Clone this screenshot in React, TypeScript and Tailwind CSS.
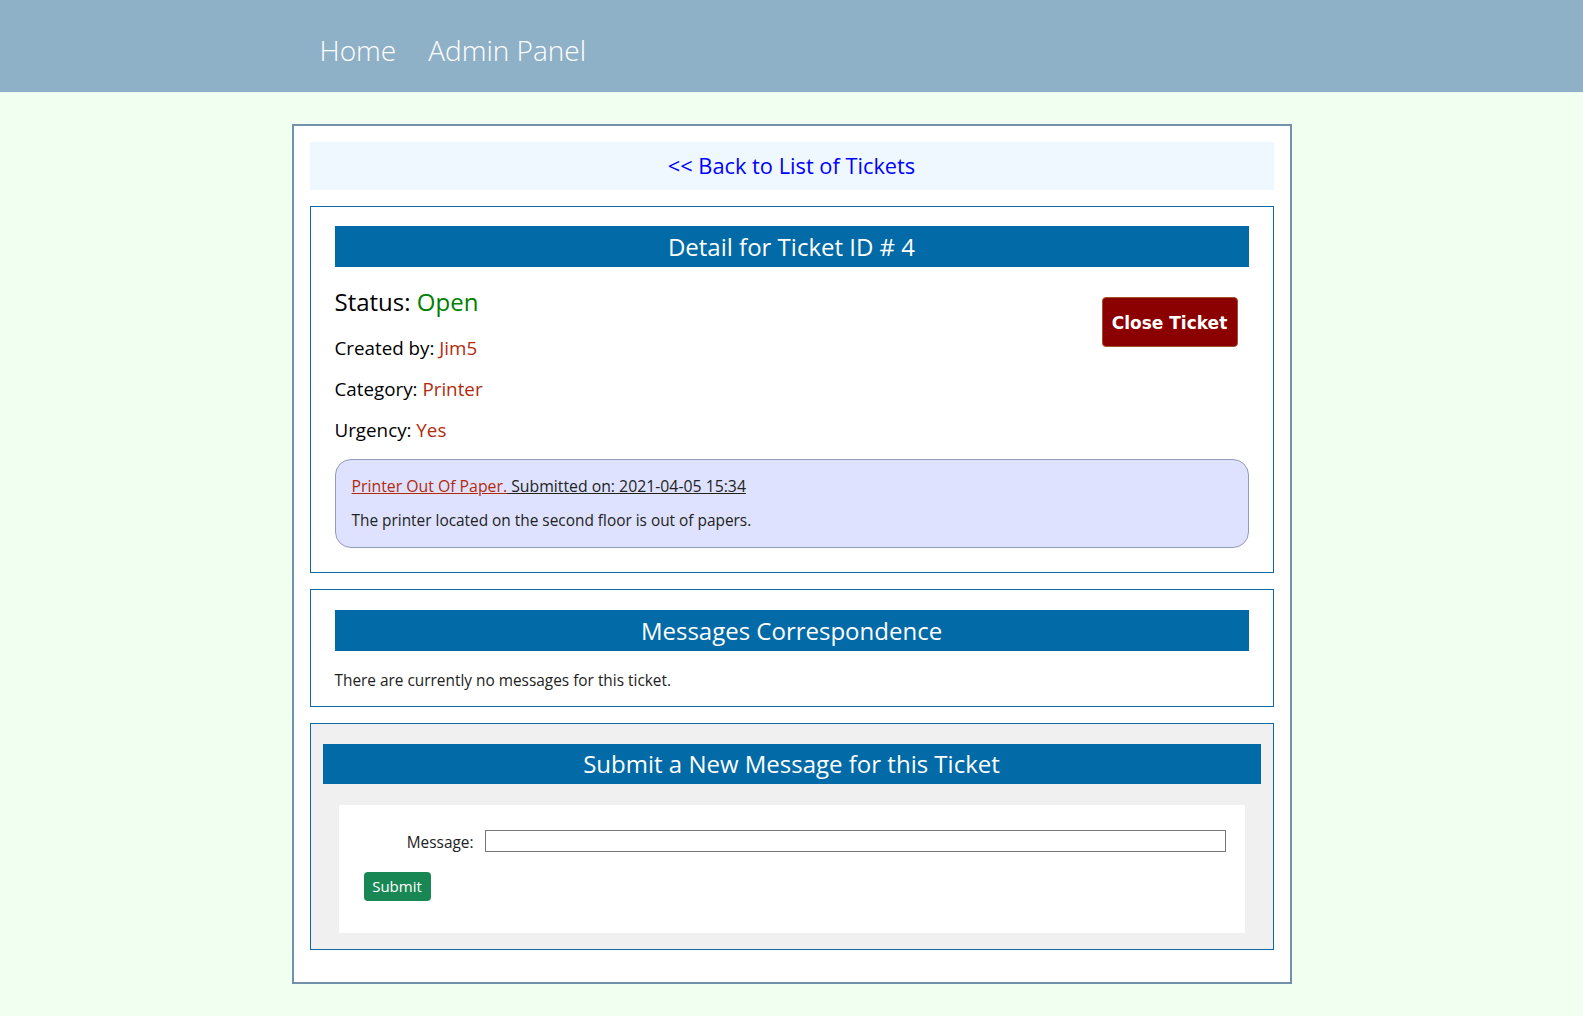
import React from "react";

const sans = { fontFamily: '"Open Sans", "Noto Sans", sans-serif' } as React.CSSProperties;

export default function App() {
  return (
    <div className="min-h-screen bg-[#f0fff0] text-black" style={sans}>
      <header className="h-[92px] bg-[#8fb1c8]">
        <nav className="w-[1000px] mx-auto h-full flex items-center pl-[28px] pt-[8px] gap-[32px]">
          <a className="text-[28px] leading-[28px] font-light text-white cursor-pointer">Home</a>
          <a className="text-[28px] leading-[28px] font-light text-white cursor-pointer">Admin Panel</a>
        </nav>
      </header>

      <main className="w-[1000px] mx-auto mt-8 border-2 border-[#7391ad] bg-white px-4 pt-4 pb-8">
        <div className="h-[48px] bg-[#f0f8ff] flex items-center justify-center">
          <a className="text-[21.8px] leading-[30px] text-[#0000ff] cursor-pointer">&lt;&lt; Back to List of Tickets</a>
        </div>

        <section className="mt-4 border border-[#0b6aa3] px-6 pt-[19px] pb-6">
          <h2 className="h-[41px] bg-[#026aa7] text-white text-[24px] leading-[41px] text-center">
            Detail for Ticket ID # 4
          </h2>
          <div className="flex justify-between">
            <div>
              <div className="mt-[17px] text-[24px] leading-[36px]">
                Status: <span className="text-[#008000]">Open</span>
              </div>
              <div className="mt-[13px] text-[18.8px] leading-[30px]">
                Created by: <span className="text-[#b22a0c]">Jim5</span>
              </div>
              <div className="mt-[11px] text-[18.8px] leading-[30px]">
                Category: <span className="text-[#b22a0c]">Printer</span>
              </div>
              <div className="mt-[11px] text-[18.8px] leading-[30px]">
                Urgency: <span className="text-[#b22a0c]">Yes</span>
              </div>
            </div>
            <div className="mt-[30px] mr-[11px]">
              <button
                className="w-[136px] h-[50px] pt-[3px] bg-[#8b0000] border border-[#a0522d] rounded-[4px] text-white font-bold text-[17px]"
                style={{ fontFamily: '"DejaVu Sans", Verdana, sans-serif' }}
              >
                Close Ticket
              </button>
            </div>
          </div>
          <div className="mt-[14px] h-[89px] bg-[#dee2ff] border border-[#939cb6] rounded-[16px] px-4 pt-[14px] flex flex-col gap-[11px] text-[15.4px] leading-[24px] text-[#222]">
            <div className="text-[15.8px]">
              <span className="underline text-[#b22a0c]">Printer Out Of Paper.</span>
              <span className="underline"> Submitted on: 2021-04-05 15:34</span>
            </div>
            <div>The printer located on the second floor is out of papers.</div>
          </div>
        </section>

        <section className="mt-4 border border-[#0b6aa3] px-6 pt-5 pb-[13px]">
          <h2 className="h-[41px] bg-[#026aa7] text-white text-[24px] leading-[41px] text-center">
            Messages Correspondence
          </h2>
          <p className="mt-[18px] text-[15.4px] leading-[24px] text-[#222]">
            There are currently no messages for this ticket.
          </p>
        </section>

        <section className="mt-4 border border-[#0b6aa3] bg-[#f0f0f0] px-3 pt-5 pb-4">
          <h2 className="h-[40px] bg-[#026aa7] text-white text-[24px] leading-[40px] text-center">
            Submit a New Message for this Ticket
          </h2>
          <div className="mx-4 mt-[21px] h-[128px] bg-white pl-[25px] pt-[25px]">
            <div className="flex items-start h-[22px]">
              <label className="w-[110px] text-right text-[15.4px] leading-[22px] pt-[2px] text-[#222]">Message:</label>
              <input
                type="text"
                className="ml-[11px] mr-[19px] flex-1 h-[22px] border border-[#767676] bg-white outline-none"
              />
            </div>
            <button className="mt-[20px] w-[67px] h-[29px] bg-[#198754] rounded-[4px] text-white text-[15px]">
              Submit
            </button>
          </div>
        </section>
      </main>
      <div className="h-[33px]" />
    </div>
  );
}
